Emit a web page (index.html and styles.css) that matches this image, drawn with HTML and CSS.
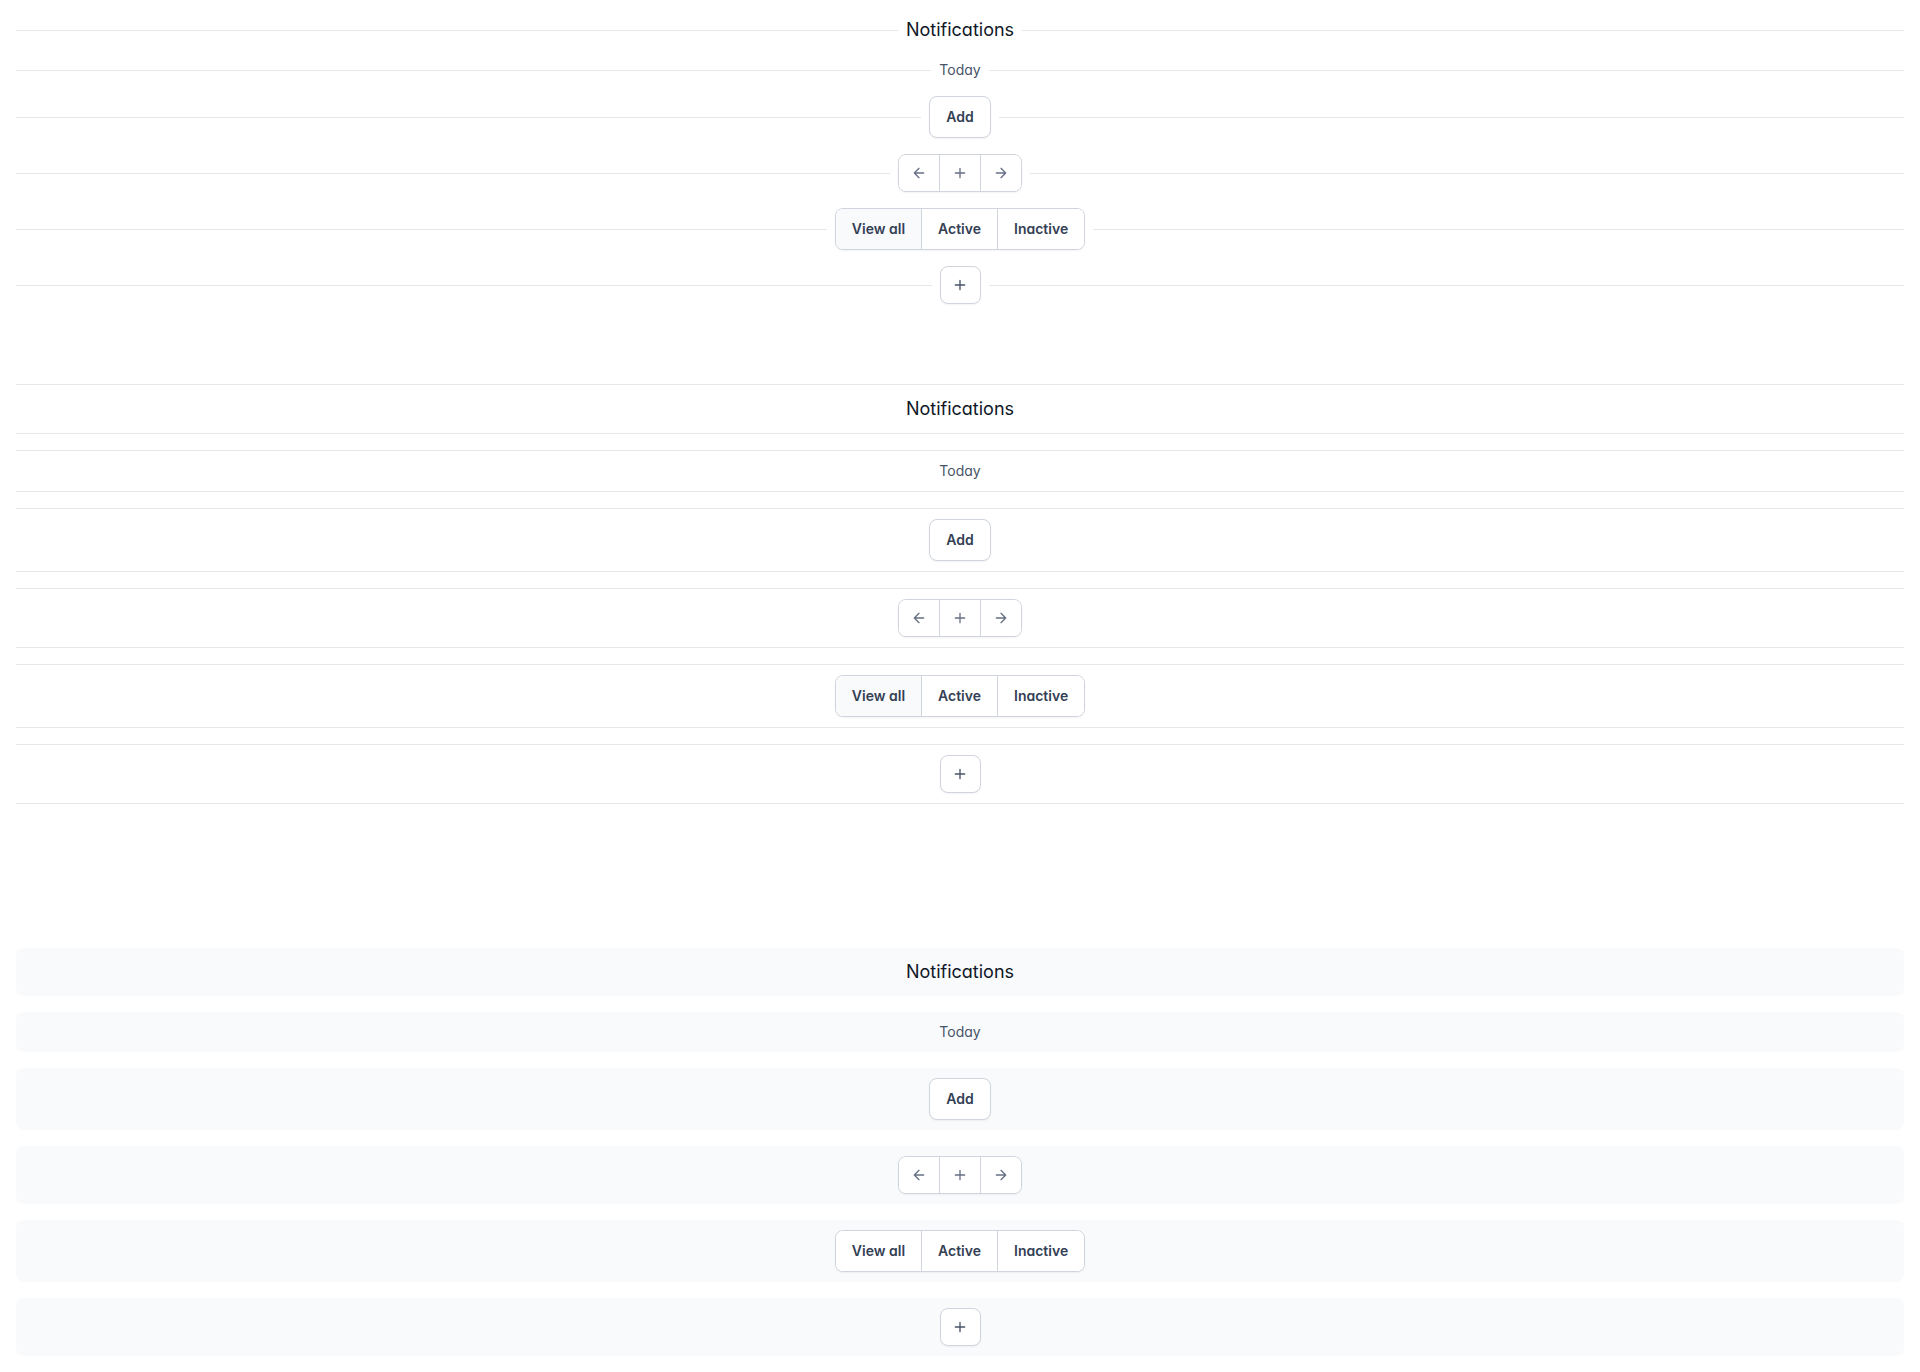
FILE: index.html
```html
<!DOCTYPE html>
<html lang="en">
<head>
<meta charset="utf-8">
<title>Dividers</title>
<link rel="stylesheet" href="styles.css">
</head>
<body>
<main class="page">

  <section class="demo demo-lines">
    <div class="line-row"><span class="title">Notifications</span></div>
    <div class="line-row"><span class="label">Today</span></div>
    <div class="line-row"><button class="btn">Add</button></div>
    <div class="line-row">
      <div class="group">
        <button class="cell icon-cell" aria-label="Previous"><svg viewBox="0 0 24 24" class="ico"><path d="M19 12H5M12 19l-7-7 7-7"/></svg></button>
        <button class="cell icon-cell" aria-label="Add"><svg viewBox="0 0 24 24" class="ico"><path d="M12 5v14M5 12h14"/></svg></button>
        <button class="cell icon-cell" aria-label="Next"><svg viewBox="0 0 24 24" class="ico"><path d="M5 12h14M12 5l7 7-7 7"/></svg></button>
      </div>
    </div>
    <div class="line-row">
      <div class="group">
        <button class="cell text-cell selected">View all</button>
        <button class="cell text-cell">Active</button>
        <button class="cell text-cell">Inactive</button>
      </div>
    </div>
    <div class="line-row"><button class="btn icon-btn" aria-label="Add"><svg viewBox="0 0 24 24" class="ico"><path d="M12 5v14M5 12h14"/></svg></button></div>
  </section>

  <section class="demo demo-bordered">
    <div class="box-row"><span class="title">Notifications</span></div>
    <div class="box-row"><span class="label">Today</span></div>
    <div class="box-row"><button class="btn">Add</button></div>
    <div class="box-row">
      <div class="group">
        <button class="cell icon-cell" aria-label="Previous"><svg viewBox="0 0 24 24" class="ico"><path d="M19 12H5M12 19l-7-7 7-7"/></svg></button>
        <button class="cell icon-cell" aria-label="Add"><svg viewBox="0 0 24 24" class="ico"><path d="M12 5v14M5 12h14"/></svg></button>
        <button class="cell icon-cell" aria-label="Next"><svg viewBox="0 0 24 24" class="ico"><path d="M5 12h14M12 5l7 7-7 7"/></svg></button>
      </div>
    </div>
    <div class="box-row">
      <div class="group">
        <button class="cell text-cell selected">View all</button>
        <button class="cell text-cell">Active</button>
        <button class="cell text-cell">Inactive</button>
      </div>
    </div>
    <div class="box-row"><button class="btn icon-btn" aria-label="Add"><svg viewBox="0 0 24 24" class="ico"><path d="M12 5v14M5 12h14"/></svg></button></div>
  </section>

  <section class="demo demo-filled">
    <div class="fill-row"><span class="title">Notifications</span></div>
    <div class="fill-row"><span class="label">Today</span></div>
    <div class="fill-row"><button class="btn">Add</button></div>
    <div class="fill-row">
      <div class="group">
        <button class="cell icon-cell" aria-label="Previous"><svg viewBox="0 0 24 24" class="ico"><path d="M19 12H5M12 19l-7-7 7-7"/></svg></button>
        <button class="cell icon-cell" aria-label="Add"><svg viewBox="0 0 24 24" class="ico"><path d="M12 5v14M5 12h14"/></svg></button>
        <button class="cell icon-cell" aria-label="Next"><svg viewBox="0 0 24 24" class="ico"><path d="M5 12h14M12 5l7 7-7 7"/></svg></button>
      </div>
    </div>
    <div class="fill-row">
      <div class="group">
        <button class="cell text-cell">View all</button>
        <button class="cell text-cell">Active</button>
        <button class="cell text-cell">Inactive</button>
      </div>
    </div>
    <div class="fill-row"><button class="btn icon-btn" aria-label="Add"><svg viewBox="0 0 24 24" class="ico"><path d="M12 5v14M5 12h14"/></svg></button></div>
  </section>

</main>
</body>
</html>
```
FILE: styles.css
```css
* { box-sizing: border-box; }

html, body {
  margin: 0;
  padding: 0;
  background: #ffffff;
}

body {
  font-family: Inter, "Noto Sans", "Liberation Sans", sans-serif;
  font-feature-settings: "cv11" 1;
  color: #111827;
  -webkit-font-smoothing: antialiased;
}

.page {
  padding: 16px;
  display: flex;
  flex-direction: column;
}

.demo {
  display: flex;
  flex-direction: column;
  gap: 16px;
}

.demo-lines { margin-bottom: 80px; }
.demo-bordered { margin-bottom: 144px; }

.title {
  font-size: 18px;
  line-height: 28px;
  font-weight: 400;
  color: #101828;
}

.label {
  font-size: 14px;
  line-height: 20px;
  font-weight: 400;
  color: #475467;
}

/* divider rows with a line on each side */
.line-row {
  display: flex;
  align-items: center;
  gap: 8px;
}
.line-row::before,
.line-row::after {
  content: "";
  flex: 1 1 0;
  height: 1px;
  background: #e5e7eb;
}

/* bordered rows */
.box-row {
  display: flex;
  justify-content: center;
  align-items: center;
  padding: 10px;
  border-top: 1px solid #e5e7eb;
  border-bottom: 1px solid #e5e7eb;
}

/* filled rows */
.fill-row {
  display: flex;
  justify-content: center;
  align-items: center;
  padding: 10px;
  background: #f9fafb;
  border-radius: 8px;
}

/* buttons */
button {
  font-family: inherit;
  font-feature-settings: inherit;
  margin: 0;
}

.btn {
  display: inline-flex;
  align-items: center;
  justify-content: center;
  height: 42px;
  padding: 0 16px;
  font-size: 14px;
  line-height: 20px;
  font-weight: 600;
  color: #344054;
  background: #ffffff;
  border: 1px solid #d0d5dd;
  border-radius: 8px;
  box-shadow: 0 1px 2px rgba(16, 24, 40, 0.05);
}

.icon-btn {
  height: 38px;
  width: 41px;
  padding: 0;
  color: #475467;
}

.group {
  display: inline-flex;
  background: #ffffff;
  border: 1px solid #d0d5dd;
  border-radius: 8px;
  overflow: hidden;
  box-shadow: 0 1px 2px rgba(16, 24, 40, 0.05);
}

.cell {
  display: inline-flex;
  align-items: center;
  justify-content: center;
  background: #ffffff;
  border: 0;
  border-left: 1px solid #d0d5dd;
  padding: 0;
}
.cell:first-child { border-left: 0; }

.icon-cell {
  width: 41px;
  height: 36px;
  color: #667085;
}
.icon-cell:first-child { width: 40px; }

.text-cell {
  height: 40px;
  padding: 0 16px;
  font-size: 14px;
  line-height: 20px;
  font-weight: 600;
  color: #344054;
}

.text-cell.selected { background: #f9fafb; }

.ico {
  width: 16px;
  height: 16px;
  fill: none;
  stroke: currentColor;
  stroke-width: 2;
  stroke-linecap: round;
  stroke-linejoin: round;
}
```
